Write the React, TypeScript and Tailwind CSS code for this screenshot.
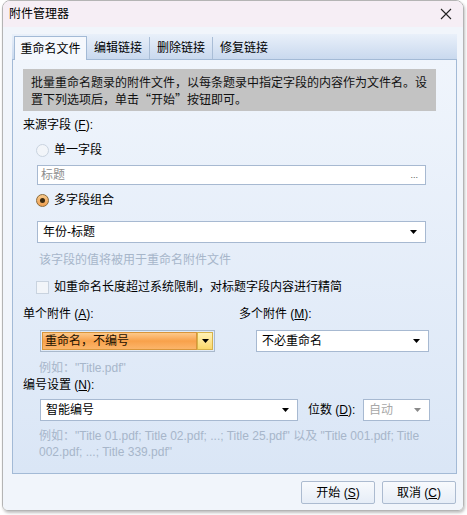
import React from "react";

const Arrow = ({ color = "#000" }: { color?: string }) => (
  <svg width="7" height="4" viewBox="0 0 7 4">
    <path d="M0 0H7L3.5 4Z" fill={color} />
  </svg>
);

const Radio = ({ checked }: { checked?: boolean }) =>
  checked ? (
    <span className="w-[13px] h-[13px] rounded-full border border-[#8a6a3a] bg-gradient-to-b from-[#f7c98a] to-[#f0a050] flex items-center justify-center">
      <span className="w-[5px] h-[5px] rounded-full bg-[#3a2a10]" />
    </span>
  ) : (
    <span className="w-[13px] h-[13px] rounded-full border border-[#c9d3df] bg-[#f2f5f9]" />
  );

const Select = ({ text, w, gray }: { text: string; w: string; gray?: boolean }) => (
  <div className={`${w} h-[22px] border border-[#a7b9d1] bg-white flex items-center pl-[5px] pr-[8px]`}>
    <span className={`flex-1 ${gray ? "text-[#a8a8a8]" : "text-black"}`}>{text}</span>
    <Arrow color={gray ? "#8a8a8a" : "#000"} />
  </div>
);

export default function App() {
  return (
    <div
      className="w-[467px] h-[515px] bg-white text-[12px] leading-[16px] text-black"
      style={{ fontFamily: '"Liberation Sans", "Noto Sans CJK SC", sans-serif' }}
    >
      <div className="ml-[2px] w-[462px] h-[511px] border border-[#b4b4b4] rounded-t-[8px] rounded-b-[6px] overflow-hidden flex flex-col shadow-[1px_2px_3px_rgba(0,0,0,0.25)]">
        {/* title bar */}
        <div className="h-[26px] bg-[#f6eef5] flex items-center pl-[6px] pr-[6px]">
          <span className="flex-1">附件管理器</span>
          <svg width="12" height="12" viewBox="0 0 12 12" className="mr-[5px]">
            <path d="M1 1L11 11M11 1L1 11" stroke="#222" strokeWidth="1.1" />
          </svg>
        </div>
        {/* body */}
        <div className="flex-1 bg-[#f1f5fb] pl-[9px] pr-[5px] pt-[7px] flex flex-col">
          {/* tab strip */}
          <div className="h-[25px] w-[445px] bg-gradient-to-b from-[#e9f0fa] to-[#c9d9ee] flex items-end pl-[2px]">
            <div className="h-[24px] w-[73px] bg-[#f5f8fd] border border-b-0 border-[#a3bad6] flex items-center justify-center relative top-[1px] z-10">
              重命名文件
            </div>
            <div className="h-[22px] flex items-center px-[7px] border-r border-[#a9bdd6]">编辑链接</div>
            <div className="h-[22px] flex items-center px-[7px] border-r border-[#a9bdd6]">删除链接</div>
            <div className="h-[22px] flex items-center px-[7px]">修复链接</div>
          </div>
          {/* panel */}
          <div className="w-[445px] h-[415px] border border-[#a3bad6] bg-gradient-to-b from-[#f0f5fc] to-[#dae6f6] pl-[10px] pr-[20px] flex flex-col">
            <div
              className="mt-[9px] h-[42px] bg-[#c3c3c3] pl-[8px] pt-[4px] leading-[17px] text-[#111]"
              style={{ fontFamily: '"Noto Sans CJK SC", sans-serif' }}
            >
              批量重命名题录的附件文件，以每条题录中指定字段的内容作为文件名。设置下列选项后，单击“开始”按钮即可。
            </div>
            <div className="mt-[6px] h-[16px]">
              来源字段 (<span className="underline">F</span>):
            </div>
            <div className="mt-[9px] h-[16px] pl-[13px] flex items-center gap-[5px]">
              <Radio />
              <span>单一字段</span>
            </div>
            <div className="mt-[7px] ml-[14px] w-[389px] h-[20px] border border-[#a7b9d1] bg-white flex items-center pl-[3px] pr-[7px]">
              <span className="flex-1 text-[#8e8e8e]">标题</span>
              <span className="text-[#555] text-[9px] leading-[10px]">...</span>
            </div>
            <div className="mt-[7px] h-[16px] pl-[13px] flex items-center gap-[5px]">
              <Radio checked />
              <span>多字段组合</span>
            </div>
            <div className="mt-[13px] ml-[14px]">
              <Select text="年份-标题" w="w-[389px]" />
            </div>
            <div className="mt-[9px] h-[16px] ml-[16px] text-[#a7b6ca]">该字段的值将被用于重命名附件文件</div>
            <div className="mt-[11px] h-[16px] pl-[13px] flex items-center gap-[5px]">
              <span className="w-[13px] h-[13px] border border-[#c9d3df] bg-[#f2f5f9]" />
              <span>如重命名长度超过系统限制，对标题字段内容进行精简</span>
            </div>
            <div className="mt-[11px] h-[16px] flex">
              <span className="w-[216px]">
                单个附件 (<span className="underline">A</span>):
              </span>
              <span>
                多个附件 (<span className="underline">M</span>):
              </span>
            </div>
            <div className="mt-[8px] h-[22px] flex">
              <div className="ml-[17px] w-[175px] h-[22px] border border-[#a9b9cc] flex p-[1px]">
                <div className="flex-1 border border-[#d9953a] bg-gradient-to-b from-[#fdc98a] via-[#f8a14a] to-[#fbb56a] flex items-center pl-[2px] text-[#1a1000]">
                  重命名，不编号
                </div>
                <div className="w-[16px] border border-[#d7b24a] bg-gradient-to-b from-[#fff2b5] to-[#fbd86a] flex items-center justify-center">
                  <Arrow />
                </div>
              </div>
              <div className="ml-[41px]">
                <Select text="不必重命名" w="w-[173px]" />
              </div>
            </div>
            <div className="mt-[8px] h-[16px] ml-[16px] text-[#a7b6ca]">例如："Title.pdf"</div>
            <div className="mt-[1px] h-[16px]">
              编号设置 (<span className="underline">N</span>):
            </div>
            <div className="mt-[6px] h-[22px] flex items-center">
              <div className="ml-[17px]">
                <Select text="智能编号" w="w-[258px]" />
              </div>
              <span className="ml-[10px] w-[55px]">
                位数 (<span className="underline">D</span>):
              </span>
              <Select text="自动" w="w-[67px]" gray />
            </div>
            <div className="mt-[7px] ml-[16px] text-[#a7b6ca] leading-[16px]">
              例如："Title 01.pdf; Title 02.pdf; ...; Title 25.pdf" 以及 "Title 001.pdf; Title
              <br />
              002.pdf; ...; Title 339.pdf"
            </div>
          </div>
          {/* buttons */}
          <div className="w-[445px] mt-[7px] flex justify-end gap-[7px] pr-[1px]">
            <button className="w-[74px] h-[23px] border border-[#acbbd0] rounded-[2px] bg-gradient-to-b from-[#f8fafd] to-[#e6edf7] text-[12px]">
              开始 (<span className="underline">S</span>)
            </button>
            <button className="w-[74px] h-[23px] border border-[#acbbd0] rounded-[2px] bg-gradient-to-b from-[#f8fafd] to-[#e6edf7] text-[12px]">
              取消 (<span className="underline">C</span>)
            </button>
          </div>
        </div>
      </div>
    </div>
  );
}
